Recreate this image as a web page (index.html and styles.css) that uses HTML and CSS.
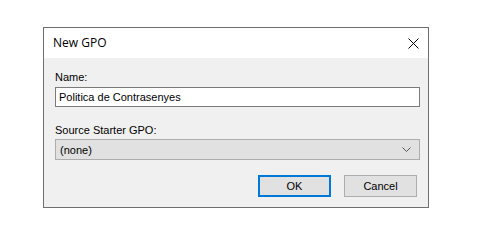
FILE: index.html
```html
<!DOCTYPE html>
<html lang="en">
<head>
  <meta charset="UTF-8">
  <title>New GPO</title>
  <link rel="stylesheet" href="styles.css">
</head>
<body>
  <div class="dialog">
    <div class="titlebar">
      <span class="title">New GPO</span>
      <svg class="close" width="11" height="11" viewBox="0 0 11 11">
        <path d="M0.5 0.5 L10.5 10.5 M10.5 0.5 L0.5 10.5" stroke="#000" stroke-width="1" fill="none"/>
      </svg>
    </div>
    <div class="content">
      <label class="label" for="name">Name:</label>
      <input class="textbox" type="text" id="name" value="Politica de Contrasenyes">

      <label class="label label-gap" for="starter">Source Starter GPO:</label>
      <div class="combo" id="starter">
        <span>(none)</span>
        <svg width="9" height="5" viewBox="0 0 9 5">
          <path d="M0.5 0.5 L4.5 4.5 L8.5 0.5" stroke="#555" stroke-width="1" fill="none"/>
        </svg>
      </div>

      <div class="buttons">
        <button class="btn btn-default">OK</button>
        <button class="btn">Cancel</button>
      </div>
    </div>
  </div>
</body>
</html>
```

FILE: styles.css
```css
/* Windows-style dialog */
body {
  margin: 0;
  padding: 27px 0 0 43px;
  background-color: #fff;
  font-family: "Liberation Sans", Arial, sans-serif;
  font-size: 11px;
  color: #000;
}

.dialog {
  box-sizing: border-box;
  width: 386px;
  height: 181px;
  border: 1px solid #6f6f6f;
  display: flex;
  flex-direction: column;
}

.titlebar {
  height: 30px;
  background-color: #fff;
  display: flex;
  align-items: center;
  padding: 0 9px 0 9px;
}

.title {
  flex: 1;
  font-family: "Open Sans", "Noto Sans", sans-serif;
  font-size: 12px;
  padding-bottom: 1px;
}

.close {
  margin-top: 1px;
}

.content {
  flex: 1;
  background-color: #f0f0f0;
  padding: 13px 8px 0 11px;
  display: flex;
  flex-direction: column;
}

.label {
  line-height: 13px;
  margin-bottom: 3px;
}

.label-gap {
  margin-top: 17px;
  margin-bottom: 2px;
}

.textbox {
  box-sizing: border-box;
  height: 20px;
  margin: 0;
  padding: 0 3px;
  border: 1px solid #7a7a7a;
  background-color: #fff;
  font-family: inherit;
  font-size: 11px;
  color: #000;
  outline: none;
}

.combo {
  box-sizing: border-box;
  height: 21px;
  padding: 0 8px 0 4px;
  border: 1px solid #adadad;
  background-color: #e1e1e1;
  display: flex;
  align-items: center;
  justify-content: space-between;
}

.buttons {
  display: flex;
  justify-content: flex-end;
  gap: 13px;
  margin-top: 15px;
  padding-right: 3px;
}

.btn {
  box-sizing: border-box;
  width: 73px;
  height: 22px;
  border: 1px solid #adadad;
  background-color: #e1e1e1;
  font-family: inherit;
  font-size: 11px;
  color: #000;
  padding: 0;
}

.btn-default {
  border: 2px solid #0078d7;
}
```
